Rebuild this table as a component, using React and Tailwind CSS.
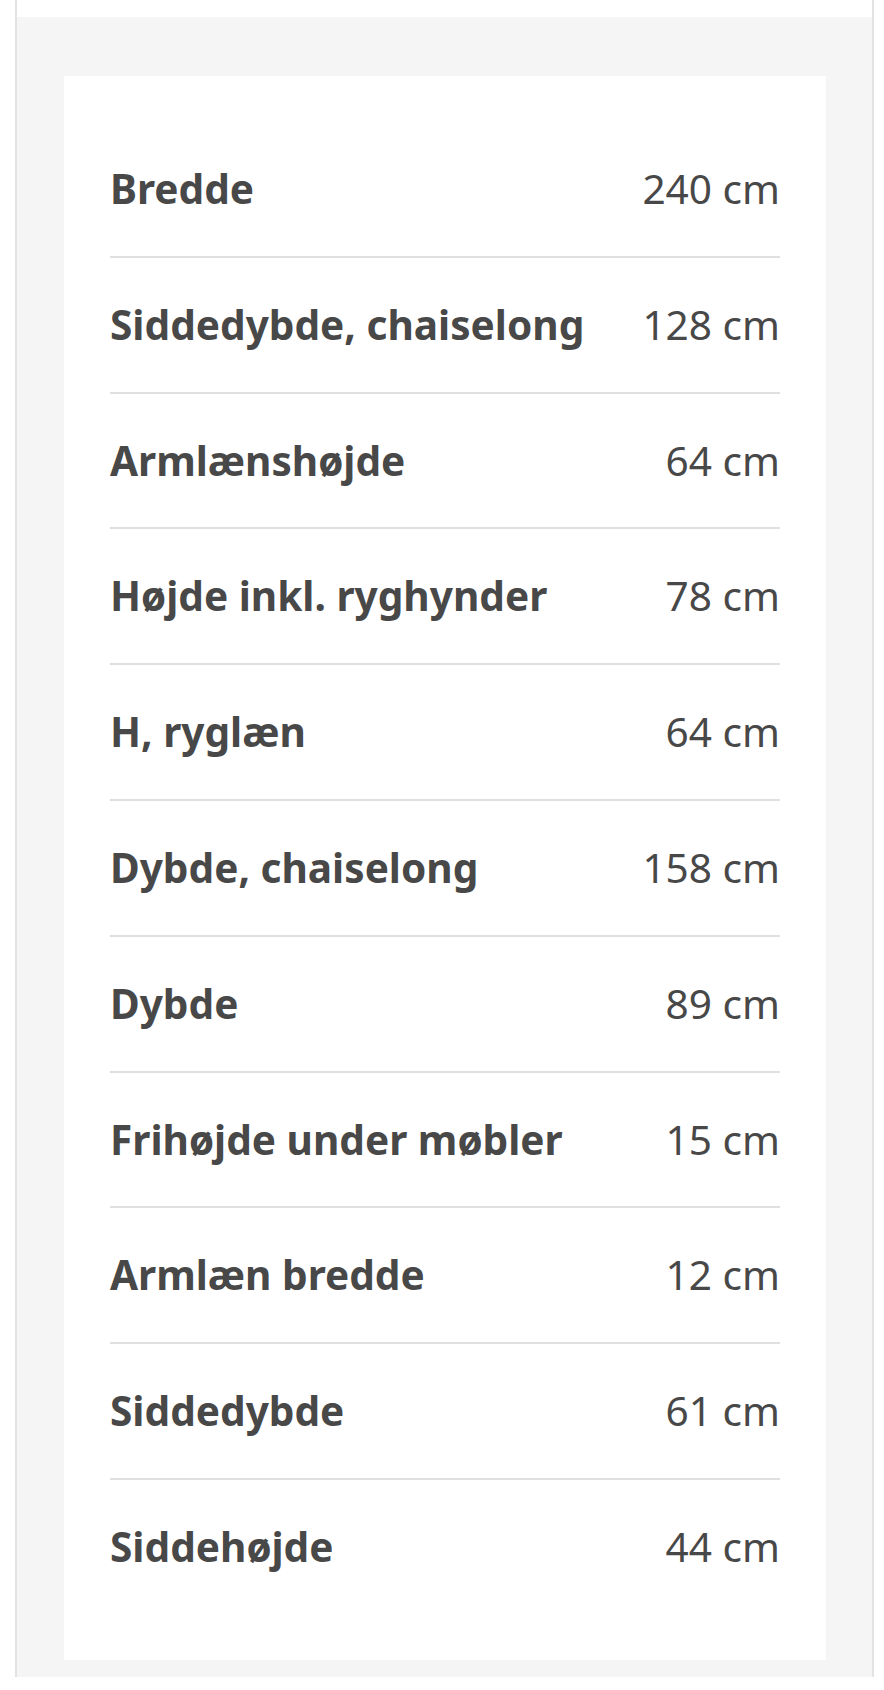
const rows = [
  ['Bredde', '240 cm'],
  ['Siddedybde, chaiselong', '128 cm'],
  ['Armlænshøjde', '64 cm'],
  ['Højde inkl. ryghynder', '78 cm'],
  ['H, ryglæn', '64 cm'],
  ['Dybde, chaiselong', '158 cm'],
  ['Dybde', '89 cm'],
  ['Frihøjde under møbler', '15 cm'],
  ['Armlæn bredde', '12 cm'],
  ['Siddedybde', '61 cm'],
  ['Siddehøjde', '44 cm'],
];

export default function App() {
  return (
    <div className="w-[884px] min-h-[1690px] bg-white" style={{ fontFamily: '"Noto Sans", sans-serif' }}>
      <div className="ml-[15px] w-[859px] border-x-2 border-[#e3e3e3]">
        {/* bottom of the card above */}
        <div className="h-[17px] bg-white" />

        {/* Measurements panel */}
        <div className="bg-[#f5f5f5] pl-[47px] pr-[46px] pt-[59px] pb-[17px]">
          <div className="bg-white px-[46px] py-[46px]">
            {rows.map(([label, value], i) => (
              <div
                key={label}
                className={`flex items-center justify-between py-[37px] ${
                  i < rows.length - 1 ? 'border-b-2 border-[#e0e0e0]' : ''
                }`}
              >
                <span className="text-[40.6px] leading-[59.8px] font-bold text-[#484848]">{label}</span>
                <span className="text-[40.6px] leading-[59.8px] text-[#484848]">{value}</span>
              </div>
            ))}
          </div>
        </div>
      </div>
    </div>
  );
}
